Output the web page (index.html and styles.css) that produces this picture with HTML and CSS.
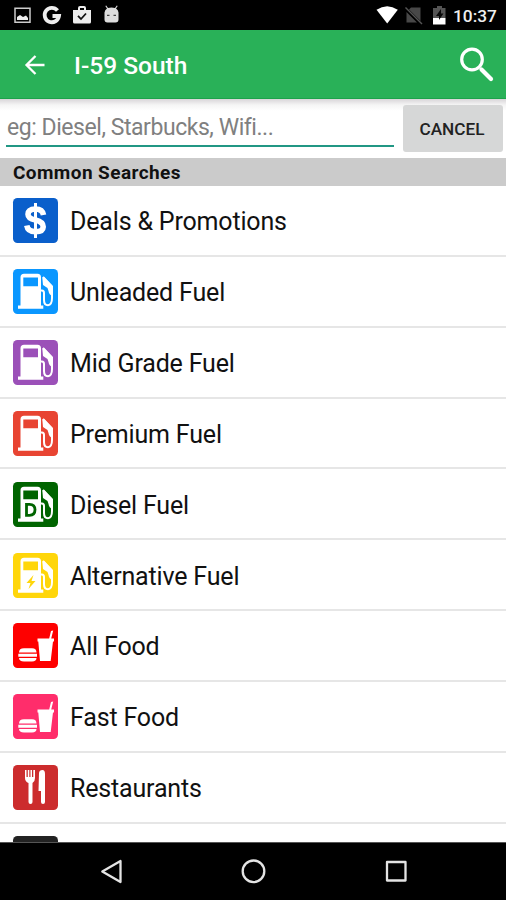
FILE: index.html
```html
<!DOCTYPE html>
<html lang="en">
<head>
<meta charset="utf-8">
<title>I-59 South</title>
<link rel="stylesheet" href="styles.css">
</head>
<body>
<svg class="defs" width="0" height="0">
  <symbol id="pump" viewBox="0 0 45 45">
    <path fill="#fff" fill-rule="evenodd" d="M11 4.700H24.500Q28 4.700 28 8.200V36.500H30.300V39.700H5V36.500H7.500V8.200Q7.500 4.700 11 4.700ZM10.300 8.500V17.300H25V8.500Z"/>
    <path fill="none" stroke="#fff" stroke-width="2" stroke-linejoin="round" d="M27.500 21.500H29Q31 21.500 31 24V31Q31 36.200 35 36.200Q39 36 39 29V17.500L30 8"/>
    <path fill="#fff" d="M29.300 8.500L31 8L39.500 17V27Q36 26 35.500 22L34.500 19L30 16Z"/>
  </symbol>
  <symbol id="food" viewBox="0 0 45 45">
    <path fill="#fff" d="M24.500 15.500H36.200L38 8L40.200 7.500L38.200 15.500H41V18.500H40L37.700 38H27L25.300 18.500H24.500Z"/>
    <path fill="#fff" d="M6 29.500Q6 25.200 11 25.200H19Q23.500 25.200 23.500 29.500ZM5.300 30.800H24V33.800H5.300ZM6 35H23.500Q23.500 38.400 19 38.400H11Q6 38.400 6 35Z"/>
  </symbol>
</svg>
<div class="screen">
  <header class="status">
    <svg width="124" height="30" viewBox="0 0 124 30">
      <path fill="none" stroke="#ccc" stroke-width="1.500" d="M15 8.200H30V22.300H15Z"/>
      <path fill="#eee" d="M17 20V17L20 15L23 17L26 15.500L28 18V20Z"/>
      <path fill="none" stroke="#eee" stroke-width="3.800" d="M57.500 10.500A7.200 7.200 0 1 0 59 16H52.500"/>
      <path fill="#eee" fill-rule="evenodd" d="M73 10H78V8Q78 6 80 6H84Q86 6 86 8V10H91V22Q91 23.500 89.500 23.500H74.500Q73 23.500 73 22ZM80 10H84V8H80Z"/>
      <path fill="none" stroke="#111" stroke-width="1.800" d="M78 15.800L81 19L86 13.500"/>
      <path fill="#ddd" d="M104.500 12.500Q104.800 10 107 8.500L105.300 6L106.200 5.500L108 8Q111.500 7 115 8L116.800 5.500L117.700 6L116 8.500Q118.300 10 118.500 12.500V19.500Q118.500 22.500 115.500 22.500H107.500Q104.500 22.500 104.500 19.500Z"/>
      <path fill="#444" d="M107 14.800H109.500V16H107ZM113.500 14.800H116V16H113.500Z"/>
    </svg>
    <svg class="status-right" width="74" height="30" viewBox="0 0 74 30">
      <path fill="#fff" d="M.5 9.800Q11.200 2.500 21.800 9.800L11.200 23.500Z"/>
      <path fill="#484848" d="M35 7.500H44.500V21L33 9.500ZM30.500 12L41 22.500H30.500Z"/>
      <path stroke="#555" stroke-width="1.500" d="M29.500 7.500L46 24"/>
      <path fill="#555" d="M59 8H61V6H66V8H69.500V18H57V8Z"/>
      <path fill="#fff" d="M57 18H69.500V24.500H57Z"/>
      <path fill="#080808" d="M65 9L60 16H63V20L67.500 13.500H65Z"/>
    </svg>
    <span class="clock">10:37</span>
  </header>
  <div class="bar">
    <svg width="22" height="22" viewBox="0 0 22 22"><path fill="none" stroke="#fff" stroke-width="2.300" d="M20.500 11H3M11.500 2L2.500 11L11.500 20"/></svg>
    <h1>I-59 South</h1>
    <svg class="search" width="36" height="36" viewBox="0 0 36 36"><circle cx="13" cy="13.500" r="10.300" fill="none" stroke="#fff" stroke-width="3.200"/><path stroke="#fff" stroke-width="4.200" stroke-linecap="round" d="M22.500 23.500L32 33"/></svg>
  </div>
  <div class="find">
    <div class="field">eg: Diesel, Starbucks, Wifi...</div>
    <div class="cancel">CANCEL</div>
  </div>
  <h2>Common Searches</h2>
  <div class="list">
    <div class="row"><svg class="tile deals" viewBox="0 0 45 45"><path fill="none" stroke="#fff" stroke-width="5.600" d="M30.500 17Q29.500 11 22.500 11Q15 11.200 15 16.300Q15 20.500 22.500 22Q30.200 23.800 30.200 28.800Q30 33.700 22.500 33.700Q14.800 33.700 13.800 27.500"/><path stroke="#fff" stroke-width="3" d="M22.500 5V40"/></svg><span>Deals &amp; Promotions</span></div>
    <div class="row"><svg class="tile unleaded"><use href="#pump"/></svg><span>Unleaded Fuel</span></div>
    <div class="row"><svg class="tile mid"><use href="#pump"/></svg><span>Mid Grade Fuel</span></div>
    <div class="row"><svg class="tile premium"><use href="#pump"/></svg><span>Premium Fuel</span></div>
    <div class="row"><svg class="tile diesel" viewBox="0 0 45 45"><use href="#pump"/><path fill="none" stroke="#006400" stroke-width="2.800" d="M13.500 22.300H16.500Q22 22.300 22 27.800Q22 33.300 16.500 33.300H13.500Z"/></svg><span>Diesel Fuel</span></div>
    <div class="row"><svg class="tile alternative" viewBox="0 0 45 45"><use href="#pump"/><path fill="#ffd60a" d="M20.500 22L13.500 30H17.500L15.500 36L22.500 28H18.500Z"/></svg><span>Alternative Fuel</span></div>
    <div class="row"><svg class="tile allfood"><use href="#food"/></svg><span>All Food</span></div>
    <div class="row"><svg class="tile fastfood"><use href="#food"/></svg><span>Fast Food</span></div>
    <div class="row"><svg class="tile restaurants" viewBox="0 0 45 45"><path fill="#fff" d="M12 5H13.500V12H14.800V5H16.300V12H17.500V5H19V12H20.300V5H22V13Q22 16.500 19.500 18V37Q19.500 39 17.500 39Q15.500 39 15.500 37V18Q12 16.500 12 13ZM26 8Q26.300 5 29.500 5Q32 5 32 9V37Q32 39 30 39Q28 39 28 37V26H25.500Z"/></svg><span>Restaurants</span></div>
    <div class="row"><svg class="tile more"></svg></div>
  </div>
  <nav>
    <svg width="506" height="57" viewBox="0 0 506 57" fill="none" stroke="#e4e4e4" stroke-width="2.300" stroke-linejoin="round"><path d="M120.500 18V39L102.300 28.500Z"/><circle cx="253.500" cy="28.300" r="10.800"/><path d="M387 19H405.500V37.500H387Z"/></svg>
  </nav>
</div>
</body>
</html>
```
FILE: styles.css
```css
* { box-sizing: border-box; }
body { margin: 0; background: #fff; font-family: Roboto, "Liberation Sans", sans-serif; }
svg { display: block; flex: none; }
.defs { position: absolute; }
.screen { display: flex; flex-direction: column; width: 506px; height: 900px; overflow: hidden; }
.status { display: flex; align-items: center; height: 30px; padding-right: 9px; background: #000; }
.status-right { margin-left: auto; margin-right: 3px; }
.clock { width: 44px; color: #eee; font-size: 17.300px; font-weight: 500; line-height: 30px; padding-top: 2px; white-space: nowrap; }
.bar { display: flex; align-items: center; height: 69px; padding: 2px 11px 0 24px; background: #29b158; border-bottom: 1px solid #1ca24b; }
.bar h1 { margin: 0 auto 0 28px; color: #fff; font-size: 24.500px; line-height: 36px; font-weight: 500; padding-top: 2px; }
.search { margin-top: -2px; }
.find { display: flex; justify-content: space-between; height: 59px; padding: 6px 3px 0 6px; background: linear-gradient(#d8d5d8, #f5f5f5 6px, #fff 12px); }
.field { width: 388px; height: 42px; padding-left: 1px; border-bottom: 2px solid #219784; color: #808080; font-size: 23px; letter-spacing: -0.450px; line-height: 46px; white-space: nowrap; }
.cancel { width: 100px; height: 47px; border-radius: 3px; background: #d6d7d7; color: #222; font-size: 17.200px; font-weight: 500; line-height: 48px; padding-right: 2px; text-align: center; }
h2 { height: 28px; margin: 0; padding-left: 13px; background: #cbcbcb; color: #111; font-size: 19px; letter-spacing: 0.420px; line-height: 29px; font-weight: 700; }
.list { height: 656px; overflow: hidden; }
.row { display: flex; align-items: flex-start; height: 70.860px; padding: 12.300px 0 0 12.500px; border-bottom: 2px solid #e6e6e6; color: #111; font-size: 25px; letter-spacing: -0.170px; line-height: 47px; }
.row span { margin-left: 12.500px; white-space: nowrap; }
.tile { width: 45px; height: 45px; border-radius: 4.500px; }
.deals { background: #0a5fcb; }
.unleaded { background: #0a97ff; }
.mid { background: #9b50b8; }
.premium { background: #e84432; }
.diesel { background: #006400; }
.alternative { background: #ffd60a; }
.allfood { background: #fe0000; }
.fastfood { background: #ff2d6b; }
.restaurants { background: #cc2c2d; }
.more { background: #222; }
nav { height: 58px; border-top: 1px solid #555; background: #000; }
```
